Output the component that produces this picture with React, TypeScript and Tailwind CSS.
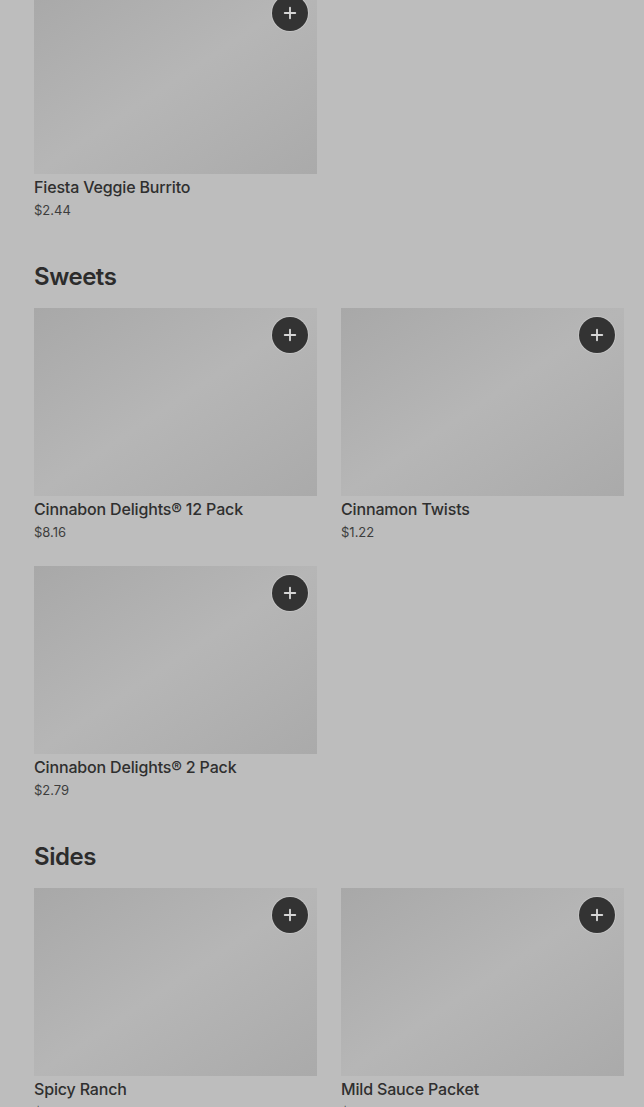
import { Plus } from 'lucide-react';

type Item = { name: string; price: string };

const sections: { title?: string; items: Item[] }[] = [
  { items: [{ name: 'Fiesta Veggie Burrito', price: '$2.44' }] },
  {
    title: 'Sweets',
    items: [
      { name: 'Cinnabon Delights® 12 Pack', price: '$8.16' },
      { name: 'Cinnamon Twists', price: '$1.22' },
      { name: 'Cinnabon Delights® 2 Pack', price: '$2.79' },
    ],
  },
  {
    title: 'Sides',
    items: [
      { name: 'Spicy Ranch', price: '$0.00' },
      { name: 'Mild Sauce Packet', price: '$0.00' },
    ],
  },
];

function ItemCard({ item }: { item: Item }) {
  return (
    <div>
      <div className="relative h-[188px] bg-linear-to-br from-[#a8a8a8] via-[#b6b6b6] to-[#aaaaaa]">
        <button className="absolute top-[9px] right-[9px] w-9 h-9 rounded-full bg-[#333333] ring-1 ring-[#cfcfcf]/60 flex items-center justify-center text-[#d6d6d6]">
          <Plus size={18} strokeWidth={2.5} />
        </button>
      </div>
      <p className="mt-[2px] text-[16px] leading-[22px] font-medium tracking-[-0.01em] text-[#2f2f2f]">{item.name}</p>
      <p className="mt-[2px] text-[13px] leading-[20px] text-[#3d3d3d]">{item.price}</p>
    </div>
  );
}

export default function App() {
  return (
    <div className="min-h-screen bg-[#bdbdbd] overflow-hidden font-['Inter','Liberation_Sans',sans-serif]">
      <div className="-mt-[14px] pl-[34px] pr-[20px] flex flex-col gap-[41px]">
        {sections.map((s, i) => (
          <section key={i}>
            {s.title && (
              <h2 className="mb-[15px] text-[24px] leading-8 font-semibold tracking-[-0.02em] text-[#2c2c2c]">{s.title}</h2>
            )}
            <div className="grid grid-cols-2 gap-x-6 gap-y-[24px]">
              {s.items.map((it) => (
                <ItemCard key={it.name} item={it} />
              ))}
            </div>
          </section>
        ))}
      </div>
    </div>
  );
}
